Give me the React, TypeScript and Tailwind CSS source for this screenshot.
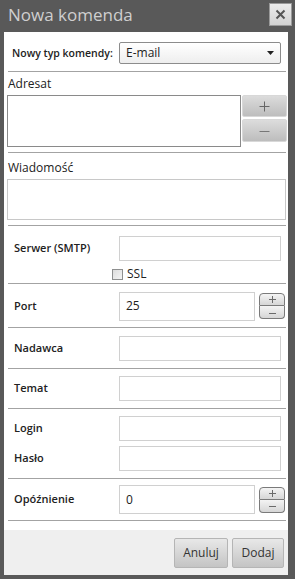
import React from "react";

const font = { fontFamily: '"Open Sans", "Noto Sans", sans-serif' };

function Sep() {
  return <div className="h-px bg-[#a3a3a3] ml-[4px] mr-[2px] shrink-0" />;
}

function Input({ value = "", w = "w-[162px]", h = "h-[25px]" }: { value?: string; w?: string; h?: string }) {
  return (
    <div className={`${w} ${h} border border-[#d0d0d0] bg-white text-[12px] text-[#222] pl-[6px] flex items-center`}>
      {value}
    </div>
  );
}

function Spin() {
  return (
    <div className="flex flex-col w-[26px] ml-[4px]">
      <div className="h-[13px] rounded-t-[4px] border border-[#7a7a7a] bg-gradient-to-b from-[#f4f4f4] to-[#d6d6d6] flex items-center justify-center">
        <svg width="9" height="9" viewBox="0 0 9 9"><path d="M4.5 1v7M1 4.5h7" stroke="#6a6a6a" strokeWidth="1" /></svg>
      </div>
      <div className="h-[13px] rounded-b-[4px] border border-t-0 border-[#7a7a7a] bg-gradient-to-b from-[#f4f4f4] to-[#d6d6d6] flex items-center justify-center">
        <svg width="9" height="9" viewBox="0 0 9 9"><path d="M1 5.5h7" stroke="#6a6a6a" strokeWidth="1" /></svg>
      </div>
    </div>
  );
}

function Label({ children }: { children: React.ReactNode }) {
  return <div className="w-[115px] pl-[10px] text-[11px] font-semibold text-[#222] shrink-0">{children}</div>;
}

export default function App() {
  return (
    <div className="w-[295px] h-[579px] bg-[#595959] flex flex-col pl-[4px] pr-[7px] pb-[4px]" style={font}>
      <div className="h-[32px] flex items-center justify-between shrink-0">
        <div className="text-[17px] text-[#cfcfcf] pl-[4px] pb-[2px]">Nowa komenda</div>
        <div className="w-[23px] h-[23px] mr-[-4px] mb-[3px] bg-gradient-to-b from-[#ececec] to-[#d2d2d2] border border-[#9a9a9a] flex items-center justify-center">
          <svg width="11" height="11" viewBox="0 0 11 11"><path d="M1.5 1.5l8 8M9.5 1.5l-8 8" stroke="#555" strokeWidth="2" /></svg>
        </div>
      </div>
      <div className="flex-1 bg-white flex flex-col">
        {/* type row */}
        <div className="h-[39px] flex items-start pt-[10px] shrink-0">
          <div className="w-[115px] pl-[8px] pt-[4px] text-[10.5px] font-semibold text-[#222] whitespace-nowrap">Nowy typ komendy:</div>
          <div className="w-[162px] h-[22px] border border-[#8c8c8c] rounded-[2px] bg-gradient-to-b from-[#ffffff] to-[#eeeeee] flex items-center justify-between pl-[6px] pr-[6px]">
            <span className="text-[12px] text-[#222]">E-mail</span>
            <svg width="7" height="4" viewBox="0 0 7 4"><path d="M0 0h7L3.5 4z" fill="#222" /></svg>
          </div>
        </div>
        <Sep />
        {/* Adresat */}
        <div className="h-[80px] flex flex-col shrink-0">
          <div className="h-[23px] pl-[4px] pt-[3px] text-[12px] text-[#222]">Adresat</div>
          <div className="flex">
            <div className="ml-[3px] w-[234px] h-[52px] border border-[#8a8a8a] bg-white" />
            <div className="flex flex-col gap-[2px] ml-[1px]">
              <div className="w-[45px] h-[22px] rounded-[2px] border border-[#d8d8d8] bg-gradient-to-b from-[#dcdcdc] to-[#bdbdbd] flex items-center justify-center">
                <svg width="11" height="11" viewBox="0 0 11 11"><path d="M5.5 0.5v10M0.5 5.5h10" stroke="#666" strokeWidth="1" /></svg>
              </div>
              <div className="w-[45px] h-[23px] rounded-[2px] border border-[#d8d8d8] bg-gradient-to-b from-[#dcdcdc] to-[#bdbdbd] flex items-center justify-center">
                <svg width="11" height="11" viewBox="0 0 11 11"><path d="M0.5 6.5h10" stroke="#777" strokeWidth="1" /></svg>
              </div>
            </div>
          </div>
        </div>
        <Sep />
        {/* Wiadomość */}
        <div className="h-[72px] flex flex-col shrink-0">
          <div className="h-[26px] pl-[4px] pt-[6px] text-[12px] text-[#222]">Wiadomość</div>
          <div className="ml-[3px] mr-[2px] h-[41px] border border-[#c8c8c8] bg-white" />
        </div>
        <Sep />
        {/* Serwer */}
        <div className="h-[57px] flex flex-col pt-[10px] shrink-0">
          <div className="flex items-center">
            <Label>Serwer (SMTP)</Label>
            <Input />
          </div>
          <div className="flex items-center ml-[108px] mt-[4px]">
            <div className="w-[11px] h-[11px] border border-[#8e8f8f] bg-gradient-to-br from-[#dcdcdc] to-[#f4f4f4]" />
            <span className="ml-[4px] text-[12px] text-[#222]">SSL</span>
          </div>
        </div>
        <Sep />
        {/* Port */}
        <div className="h-[43px] flex items-center shrink-0 pt-[1px]">
          <Label>Port</Label>
          <Input value="25" w="w-[136px]" h="h-[29px]" />
          <Spin />
        </div>
        <Sep />
        <div className="h-[40px] flex items-center shrink-0">
          <Label>Nadawca</Label>
          <Input />
        </div>
        <Sep />
        <div className="h-[39px] flex items-center shrink-0">
          <Label>Temat</Label>
          <Input />
        </div>
        <Sep />
        <div className="h-[69px] flex flex-col justify-center gap-[5px] shrink-0">
          <div className="flex items-center">
            <Label>Login</Label>
            <Input />
          </div>
          <div className="flex items-center">
            <Label>Hasło</Label>
            <Input />
          </div>
        </div>
        <Sep />
        <div className="h-[41px] flex items-center shrink-0">
          <Label>Opóźnienie</Label>
          <Input value="0" w="w-[136px]" h="h-[29px]" />
          <Spin />
        </div>
        <Sep />
        <div className="flex-1 flex flex-col justify-end">
          <div className="h-[45px] bg-[#efefef] flex items-center justify-end gap-[4px] pr-[4px]">
            <button className="w-[54px] h-[30px] rounded-[2px] border border-[#b5b5b5] bg-gradient-to-b from-[#e8e8e8] to-[#c4c4c4] text-[12px] text-[#333]">Anuluj</button>
            <button className="w-[52px] h-[30px] rounded-[2px] border border-[#b5b5b5] bg-gradient-to-b from-[#e8e8e8] to-[#c4c4c4] text-[12px] text-[#333]">Dodaj</button>
          </div>
        </div>
      </div>
    </div>
  );
}
